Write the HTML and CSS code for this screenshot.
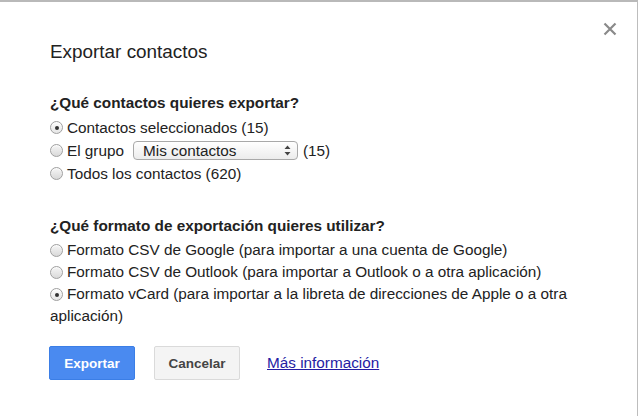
FILE: index.html
```html
<!DOCTYPE html>
<html lang="es">
<head>
<meta charset="utf-8">
<title>Exportar contactos</title>
<link rel="stylesheet" href="styles.css">
</head>
<body>
<div class="dialog">
  <button class="close" aria-label="Cerrar">
    <svg width="14" height="14" viewBox="0 0 14 14"><path d="M1.5 1.5 L12.5 12.5 M12.5 1.5 L1.5 12.5" stroke="#8a8a8a" stroke-width="2.2" fill="none"/></svg>
  </button>
  <h1 class="title">Exportar contactos</h1>

  <h2 class="question">¿Qué contactos quieres exportar?</h2>
  <div class="options options-contacts">
    <label class="option"><span class="radio checked"></span>Contactos seleccionados (15)</label>
    <label class="option"><span class="radio"></span>El grupo <span class="select"><span class="select-text">Mis contactos</span><svg class="select-arrows" width="7" height="11" viewBox="0 0 7 11"><path d="M3.5 0.5 L6.5 4 L0.5 4 Z M3.5 10.5 L6.5 7 L0.5 7 Z" fill="#444"/></svg></span> (15)</label>
    <label class="option"><span class="radio"></span>Todos los contactos (620)</label>
  </div>

  <h2 class="question q2">¿Qué formato de exportación quieres utilizar?</h2>
  <div class="options options-format">
    <div class="option-line"><span class="radio"></span>Formato CSV de Google (para importar a una cuenta de Google)</div>
    <div class="option-line"><span class="radio"></span>Formato CSV de Outlook (para importar a Outlook o a otra aplicación)</div>
    <div class="option-line"><span class="radio checked"></span>Formato vCard (para importar a la libreta de direcciones de Apple o a otra aplicación)</div>
  </div>

  <div class="actions">
    <button class="btn btn-primary">Exportar</button>
    <button class="btn btn-secondary">Cancelar</button>
    <a class="more" href="#">Más información</a>
  </div>
</div>
</body>
</html>
```

FILE: styles.css
```css
* { box-sizing: border-box; }

html, body {
  margin: 0;
  padding: 0;
  background: #ffffff;
}

body {
  font-family: "Liberation Sans", Arial, sans-serif;
  color: #222222;
  width: 640px;
  height: 416px;
  overflow: hidden;
}

.dialog {
  position: relative;
  width: 638px;
  height: 416px;
  border-top: 2px solid #b9b9b9;
  border-right: 1px solid #bdbdbd;
  padding: 39px 0 0 50px;
  background: #ffffff;
}

.close {
  position: absolute;
  top: 20px;
  right: 20px;
  width: 14px;
  height: 14px;
  padding: 0;
  border: 0;
  background: transparent;
  display: flex;
}

.title {
  margin: 0;
  font-size: 18.9px;
  line-height: 22px;
  font-weight: normal;
  color: #222222;
}

.question {
  margin: 31px 0 0 0;
  font-size: 15.3px;
  line-height: 18px;
  font-weight: bold;
  color: #222222;
}

.question.q2 {
  margin-top: 32px;
}

.options {
  font-size: 15.3px;
  color: #222222;
}

.options-contacts {
  margin-top: 4px;
}

.option {
  display: flex;
  align-items: center;
  height: 23px;
  white-space: nowrap;
}

.options-format {
  margin-top: 4px;
  width: 540px;
  line-height: 22px;
}

.option-line {
  display: block;
}

.radio {
  display: inline-block;
  width: 13px;
  height: 13px;
  border-radius: 50%;
  border: 1px solid #a0a0a0;
  background: linear-gradient(#f6f6f6, #d9d9d9);
  box-shadow: inset 0 1px 1px rgba(255,255,255,0.8);
  margin-right: 4px;
  position: relative;
  vertical-align: -2px;
  flex: none;
}

.radio.checked {
  background: linear-gradient(#fdfdfd, #e6e6e6);
}

.radio.checked::after {
  content: "";
  position: absolute;
  left: 3.5px;
  top: 3.5px;
  width: 4px;
  height: 4px;
  border-radius: 50%;
  background: #333333;
}

.select {
  display: inline-flex;
  align-items: center;
  justify-content: space-between;
  width: 165px;
  height: 19px;
  margin: 0 5px 0 9px;
  padding: 0 6px 0 9px;
  border: 1px solid #a9a9a9;
  border-radius: 4px;
  background: linear-gradient(#ffffff, #ececec);
  font-size: 15.3px;
  line-height: 17px;
}

.select-arrows {
  display: block;
}

.actions {
  display: flex;
  align-items: center;
  margin-top: 19px;
  margin-left: -1px;
}

.btn {
  height: 34px;
  width: 86px;
  border-radius: 2px;
  font-family: "Liberation Sans", Arial, sans-serif;
  font-size: 13.5px;
  font-weight: bold;
  padding: 0;
}

.btn-primary {
  background: #4a8af0;
  border: 1px solid #3b7ee6;
  color: #ffffff;
}

.btn-secondary {
  margin-left: 19px;
  background: #f4f4f4;
  border: 1px solid #dadada;
  color: #444444;
}

.more {
  margin-left: 27px;
  font-size: 15.3px;
  color: #251ca3;
  text-decoration: underline;
}
```
